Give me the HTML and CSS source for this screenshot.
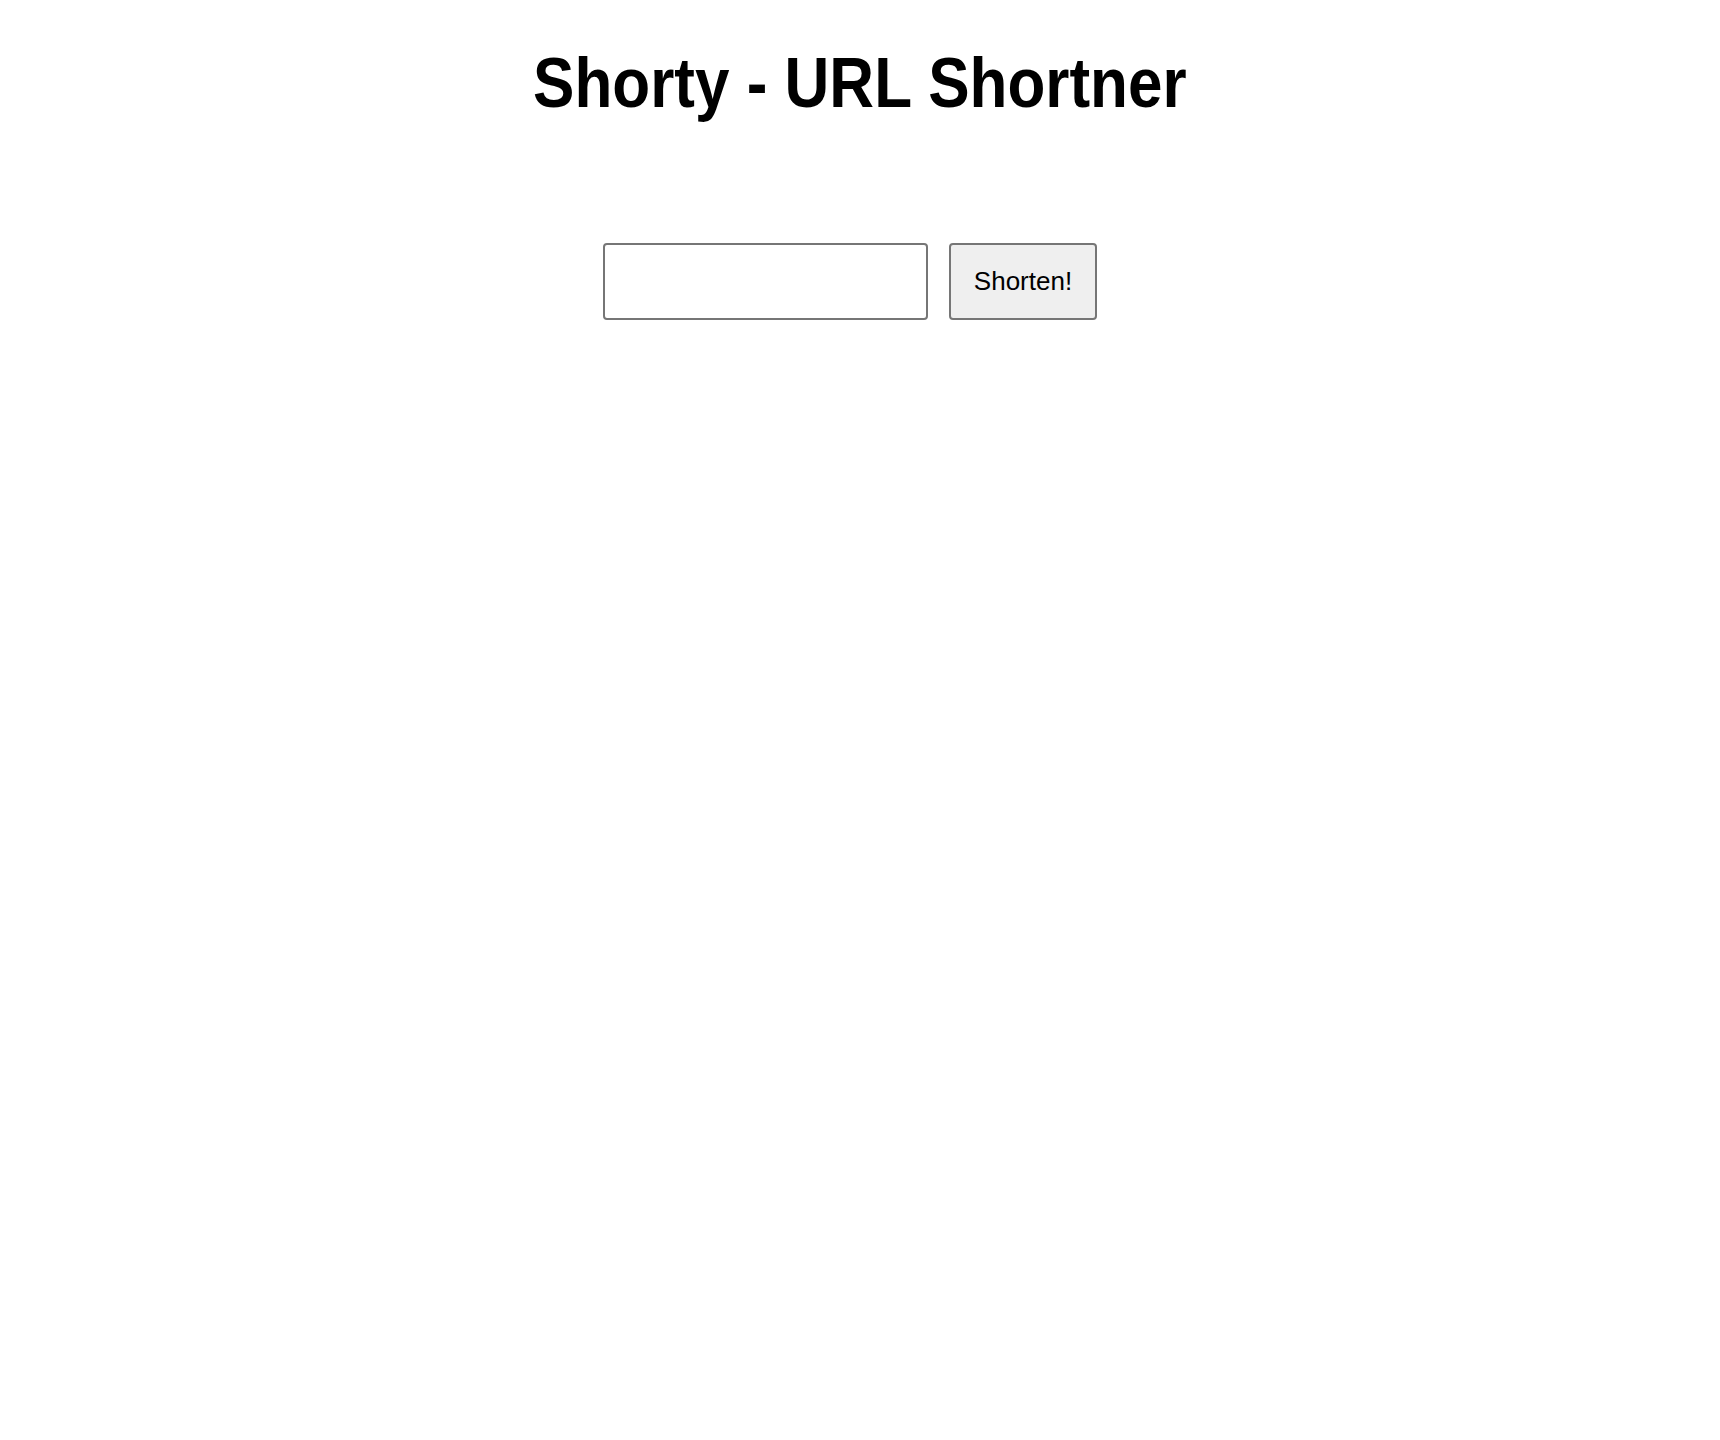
FILE: index.html
```html
<!DOCTYPE html>
<html lang="en">
<head>
<meta charset="utf-8">
<title>Shorty - URL Shortner</title>
<link rel="stylesheet" href="styles.css">
</head>
<body>
<main class="app">
  <h1 class="title">Shorty - URL Shortner</h1>
  <form class="shorten-form">
    <input class="url-input" type="text" aria-label="URL">
    <button class="shorten-btn" type="button">Shorten!</button>
  </form>
</main>
</body>
</html>
```

FILE: styles.css
```css
html, body {
  margin: 0;
  padding: 0;
  background: #ffffff;
}

.app {
  display: flex;
  flex-direction: column;
  align-items: center;
  padding-top: 43px;
}

.title {
  margin: 0;
  font-family: "Liberation Sans", Arial, Helvetica, sans-serif;
  font-weight: 700;
  font-size: 70px;
  line-height: 80px;
  color: #000;
  white-space: nowrap;
  transform: scaleX(0.886);
  transform-origin: center;
}

.shorten-form {
  display: flex;
  gap: 21px;
  margin-top: 120px;
  margin-right: 20px;
}

.url-input {
  box-sizing: border-box;
  width: 325px;
  height: 77px;
  border: 2px solid #767676;
  border-radius: 4px;
  background: #fff;
  padding: 0 10px;
  font-family: "Liberation Sans", Arial, sans-serif;
  font-size: 26px;
}

.shorten-btn {
  box-sizing: border-box;
  width: 148px;
  height: 77px;
  border: 2px solid #767676;
  border-radius: 4px;
  background: #efefef;
  color: #000;
  padding: 0;
  font-family: "Liberation Sans", Arial, sans-serif;
  font-size: 26px;
}
```
